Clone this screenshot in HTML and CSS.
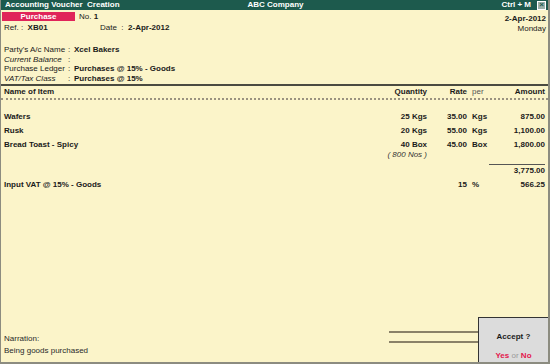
FILE: index.html
```html
<!DOCTYPE html>
<html lang="en">
<head>
    <meta charset="UTF-8">
    <title>Accounting Voucher Creation</title>
    <link rel="stylesheet" href="styles.css">
</head>
<body>

    <div class="window">
        <div class="titlebar">
            <span class="title-left">Accounting Voucher&nbsp; Creation</span>
            <span class="title-mid">ABC Company</span>
            <span class="title-right">Ctrl + M <span class="close-box">&#215;</span></span>
        </div>

        <div class="voucher-head">
            <div class="head-left">
                <div class="type-row">
                    <span class="voucher-type">Purchase</span>
                    <span>No. <b>1</b></span>
                </div>
                <div class="ref-row">
                    <span class="ref">Ref. : &nbsp;<b>XB01</b></span>
                    <span class="date">Date &nbsp;: &nbsp;<b>2-Apr-2012</b></span>
                </div>
            </div>
            <div class="head-right">
                <div class="big-date">2-Apr-2012</div>
                <div>Monday</div>
            </div>
        </div>

        <div class="party">
            <div class="field"><span class="label">Party's A/c Name</span><span class="colon">:</span><b>Xcel Bakers</b></div>
            <div class="field"><span class="label italic">Current Balance</span><span class="colon">:</span></div>
            <div class="field"><span class="label">Purchase Ledger</span><span class="colon">:</span><b>Purchases @ 15% - Goods</b></div>
            <div class="field"><span class="label italic">VAT/Tax Class</span><span class="colon">:</span><b>Purchases @ 15%</b></div>
        </div>

        <div class="item-head row">
            <span class="c-name">Name of Item</span>
            <span class="c-qty">Quantity</span>
            <span class="c-rate">Rate</span>
            <span class="c-per light">per</span>
            <span class="c-amt">Amount</span>
        </div>

        <div class="items">
            <div class="row item">
                <span class="c-name">Wafers</span>
                <span class="c-qty">25 Kgs</span>
                <span class="c-rate">35.00</span>
                <span class="c-per">Kgs</span>
                <span class="c-amt">875.00</span>
            </div>
            <div class="row item">
                <span class="c-name">Rusk</span>
                <span class="c-qty">20 Kgs</span>
                <span class="c-rate">55.00</span>
                <span class="c-per">Kgs</span>
                <span class="c-amt">1,100.00</span>
            </div>
            <div class="row item">
                <span class="c-name">Bread Toast - Spicy</span>
                <span class="c-qty">40 Box<br><i class="alt-qty">( 800 Nos )</i></span>
                <span class="c-rate">45.00</span>
                <span class="c-per">Box</span>
                <span class="c-amt">1,800.00</span>
            </div>
            <div class="row subtotal">
                <span class="c-name"></span>
                <span class="c-amt total">3,775.00</span>
            </div>
            <div class="row item">
                <span class="c-name">Input VAT @ 15% - Goods</span>
                <span class="c-qty"></span>
                <span class="c-rate">15</span>
                <span class="c-per">%</span>
                <span class="c-amt">566.25</span>
            </div>
        </div>

        <div class="foot">
            <div class="narration">
                <div>Narration:</div>
                <div>Being goods purchased</div>
            </div>
            <div class="total-lines">
                <div class="dline"></div>
                <div class="dline"></div>
            </div>
            <div class="accept">
                <div class="accept-q">Accept ?</div>
                <div class="accept-a"><span class="red">Yes</span> <span class="or">or</span> <span class="red">No</span></div>
            </div>
        </div>
    </div>

</body>
</html>
```

FILE: styles.css
```css
body {
    margin: 0;
    padding: 0;
    font-family: "Liberation Sans", Arial, sans-serif;
    font-size: 8px;
    color: #1a1a1a;
    background-color: #fbf4c9;
}

.window {
    width: 550px;
    height: 364px;
    box-sizing: border-box;
    border-left: 1px solid #8c8c80;
    border-right: 2px solid #8c8c80;
    border-bottom: 2px solid #8c8c80;
    background-color: #fbf4c9;
    display: flex;
    flex-direction: column;
}

.titlebar {
    height: 10px;
    background-color: #1d5a4d;
    color: #fff;
    font-weight: bold;
    font-size: 8px;
    line-height: 10px;
    display: flex;
    padding: 0 2px 0 4px;
    white-space: nowrap;
}

.title-left {
    flex: 1;
}

.title-mid {
    text-align: center;
}

.title-right {
    flex: 1;
    display: flex;
    align-items: center;
    justify-content: flex-end;
    gap: 6px;
}

.close-box {
    width: 7px;
    height: 7px;
    border: 1px solid #fff;
    background-color: #9bb1a9;
    color: #1d5a4d;
    font-size: 8px;
    line-height: 6px;
    text-align: center;
}

.voucher-head {
    display: flex;
    justify-content: space-between;
    padding: 1px 2px 0 1px;
    white-space: nowrap;
}

.type-row {
    display: flex;
    align-items: center;
    gap: 4px;
    height: 10px;
}

.voucher-type {
    width: 73px;
    height: 9px;
    line-height: 9px;
    background-color: #e0245a;
    color: #fff;
    font-weight: bold;
    text-align: center;
}

.ref-row {
    display: flex;
    margin-top: 2px;
    padding-left: 2px;
}

.ref {
    width: 96px;
}

.head-right {
    text-align: right;
    padding-top: 3px;
    line-height: 10px;
}

.big-date {
    font-weight: bold;
}

.party {
    padding: 11px 0 0 3px;
    line-height: 9.7px;
    white-space: nowrap;
}

.field {
    display: flex;
}

.label {
    width: 64px;
}

.italic {
    font-style: italic;
}

.colon {
    width: 6px;
}

.row {
    display: flex;
    align-items: flex-start;
    white-space: nowrap;
}

.c-name {
    flex: 1;
}

.c-qty {
    width: 70px;
    text-align: right;
}

.c-rate {
    width: 40px;
    text-align: right;
}

.c-per {
    width: 32px;
    padding-left: 5px;
    box-sizing: border-box;
}

.c-amt {
    width: 46px;
    text-align: right;
}

.item-head {
    border-top: 2px solid #4a4a40;
    border-bottom: 2px dotted #9a9280;
    padding: 1px 3px 1px 3px;
    font-weight: bold;
    line-height: 10px;
}

.light {
    font-weight: normal;
    color: #555;
}

.items {
    padding: 12px 3px 0 3px;
    font-weight: bold;
    line-height: 10px;
}

.item {
    margin-bottom: 4px;
}

.alt-qty {
    font-weight: normal;
    color: #333;
}

.subtotal {
    margin-top: 1px;
    margin-bottom: 4px;
}

.total {
    width: 56px;
    border-top: 1px solid #555;
    padding-top: 1px;
}

.foot {
    margin-top: auto;
    display: flex;
    align-items: flex-end;
    height: 45px;
}

.narration {
    flex: 1;
    padding: 0 0 5px 3px;
    line-height: 12px;
    color: #2a2a2a;
}

.total-lines {
    width: 89px;
    align-self: flex-start;
    padding-top: 14px;
}

.dline {
    height: 2px;
    background-color: #8a8168;
    margin-bottom: 8px;
}

.accept {
    width: 70px;
    height: 45px;
    box-sizing: border-box;
    border: 1px solid #333;
    border-right: none;
    border-bottom: none;
    background-color: #dcdcdc;
    text-align: center;
    font-weight: bold;
    display: flex;
    flex-direction: column;
    justify-content: space-between;
}

.accept-q {
    padding-top: 14px;
}

.accept-a {
    padding-bottom: 2px;
}

.red {
    color: #e3174c;
}

.or {
    font-weight: normal;
    color: #999;
}
```
